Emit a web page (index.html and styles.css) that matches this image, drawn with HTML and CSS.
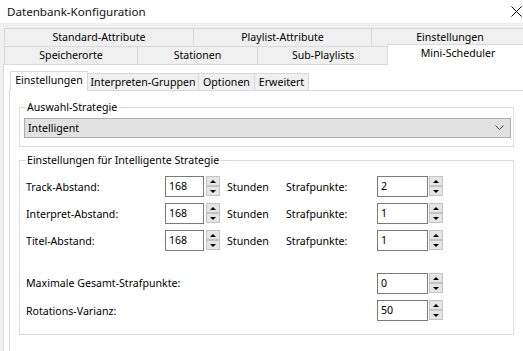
FILE: index.html
```html
<!DOCTYPE html>
<html lang="de">
<head>
<meta charset="utf-8">
<title>Datenbank-Konfiguration</title>
<link rel="stylesheet" href="styles.css">
</head>
<body>
<div class="window">
  <div class="titlebar">
    <span class="title">Datenbank-Konfiguration</span>
    <svg class="close" width="11" height="11" viewBox="0 0 11 11"><path d="M0.5 0.5 L10.5 10.5 M10.5 0.5 L0.5 10.5" stroke="#000" stroke-width="1" fill="none"/></svg>
  </div>

  <div class="tabs">
    <div class="tabrow">
      <div class="tab w189">Standard-Attribute</div>
      <div class="tab w178">Playlist-Attribute</div>
      <div class="tab grow">Einstellungen</div>
    </div>
    <div class="tabrow">
      <div class="tab w133">Speicherorte</div>
      <div class="tab w120">Stationen</div>
      <div class="tab w131">Sub-Playlists</div>
      <div class="tab grow selected">Mini-Scheduler</div>
    </div>
  </div>

  <div class="panel">
    <div class="subtabs">
      <div class="subtab selected">Einstellungen</div>
      <div class="subtab w111">Interpreten-Gruppen</div>
      <div class="subtab w56">Optionen</div>
      <div class="subtab w54">Erweitert</div>
    </div>
    <div class="subpanel">
      <fieldset class="group group-strategy">
        <legend>Auswahl-Strategie</legend>
        <div class="combo">
          <span>Intelligent</span>
          <svg class="chevron" width="9" height="6" viewBox="0 0 9 6"><path d="M0.5 0.5 L4.5 4.5 L8.5 0.5" stroke="#444" stroke-width="1" fill="none"/></svg>
        </div>
      </fieldset>

      <fieldset class="group group-settings">
        <legend>Einstellungen für Intelligente Strategie</legend>
        <div class="grid">
          <div class="label">Track-Abstand:</div>
          <div class="spin narrow"><div class="input">168</div><div class="buttons"><div class="btn"><span class="up"></span></div><div class="btn"><span class="down"></span></div></div></div>
          <div class="unit">Stunden</div>
          <div class="label">Strafpunkte:</div>
          <div class="spin wide"><div class="input">2</div><div class="buttons"><div class="btn"><span class="up"></span></div><div class="btn"><span class="down"></span></div></div></div>

          <div class="label">Interpret-Abstand:</div>
          <div class="spin narrow"><div class="input">168</div><div class="buttons"><div class="btn"><span class="up"></span></div><div class="btn"><span class="down"></span></div></div></div>
          <div class="unit">Stunden</div>
          <div class="label">Strafpunkte:</div>
          <div class="spin wide"><div class="input">1</div><div class="buttons"><div class="btn"><span class="up"></span></div><div class="btn"><span class="down"></span></div></div></div>

          <div class="label">Titel-Abstand:</div>
          <div class="spin narrow"><div class="input">168</div><div class="buttons"><div class="btn"><span class="up"></span></div><div class="btn"><span class="down"></span></div></div></div>
          <div class="unit">Stunden</div>
          <div class="label">Strafpunkte:</div>
          <div class="spin wide"><div class="input">1</div><div class="buttons"><div class="btn"><span class="up"></span></div><div class="btn"><span class="down"></span></div></div></div>

          <div class="label span4 bottom">Maximale Gesamt-Strafpunkte:</div>
          <div class="spin wide bottom"><div class="input">0</div><div class="buttons"><div class="btn"><span class="up"></span></div><div class="btn"><span class="down"></span></div></div></div>

          <div class="label span4">Rotations-Varianz:</div>
          <div class="spin wide"><div class="input">50</div><div class="buttons"><div class="btn"><span class="up"></span></div><div class="btn"><span class="down"></span></div></div></div>
        </div>
      </fieldset>
    </div>
  </div>
</div>
</body>
</html>
```

FILE: styles.css
```css
* { box-sizing: border-box; }

html, body {
  margin: 0;
  width: 523px;
  height: 351px;
  overflow: hidden;
}

body {
  background: #f0f0f0;
  font-family: "Noto Sans", "DejaVu Sans", sans-serif;
  font-size: 10.6px;
  color: #000;
}

.window {
  width: 523px;
  height: 351px;
  display: flex;
  flex-direction: column;
}

.titlebar {
  height: 23px;
  background: #fff;
  display: flex;
  align-items: center;
  justify-content: space-between;
  padding: 0 1px 1px 7px;
  flex: none;
}

.title {
  font-size: 11.6px;
  color: #111;
}

.close {
  display: block;
}

/* outer tabs */
.tabs {
  margin: 5px 0 0 4px;
  width: 525px;
  flex: none;
}

.tabrow {
  display: flex;
  align-items: flex-end;
  height: 18px;
}

.tab {
  height: 18px;
  line-height: 16px;
  text-align: center;
  background: #f0f0f0;
  border: 1px solid #d9d9d9;
  border-right: none;
  border-bottom: none;
  white-space: nowrap;
}

.tab.grow { flex: 1; border-right: 1px solid #d9d9d9; }
.w189 { width: 189px; }
.w178 { width: 178px; }
.w133 { width: 133px; }
.w120 { width: 120px; }
.w131 { width: 131px; }

.tab.selected {
  height: 21px;
  margin-bottom: -1px;
  margin-left: -1px;
  background: #fff;
  position: relative;
  z-index: 1;
  line-height: 17px;
}

/* main panel */
.panel {
  flex: 1;
  margin-left: 3px;
  width: 530px;
  background: #fff;
  border: 1px solid #d9d9d9;
  padding-top: 6px;
}

.subtabs {
  display: flex;
  align-items: flex-end;
  height: 19px;
  margin-left: 6px;
}

.subtab {
  height: 17px;
  line-height: 16px;
  text-align: center;
  background: #f0f0f0;
  border: 1px solid #d9d9d9;
  border-bottom: none;
  border-left: none;
  white-space: nowrap;
}

.w111 { width: 111px; }
.w56 { width: 56px; }
.w54 { width: 54px; }

.subtab.selected {
  height: 20px;
  margin-bottom: -1px;
  line-height: 17px;
  width: 78px;
  background: #fff;
  border-left: 1px solid #d9d9d9;
  position: relative;
  z-index: 1;
}

.subpanel {
  margin-left: 5px;
  border: 1px solid #d9d9d9;
  border-right: none;
  border-bottom: none;
  height: 270px;
  padding: 9px 0 0 9px;
}

.group {
  margin: 0;
  width: 495px;
  border: 1px solid #dcdcdc;
  padding: 0 2px 8px 4px;
  min-width: 0;
}

.group legend {
  margin-left: 2px;
  padding: 0 1px;
  line-height: 15px;
}

.combo {
  margin-top: 3px;
  height: 20px;
  background: #e1e1e1;
  border: 1px solid #adadad;
  display: flex;
  align-items: center;
  justify-content: space-between;
  padding: 0 6px 0 3px;
}

.chevron { display: block; }

.group-settings {
  margin-top: 6px;
  padding: 0 0 13px 4px;
}

.grid {
  margin: 8px 0 0 2px;
  display: grid;
  grid-template-columns: 139px 55px 66px 91px 66px;
  grid-template-rows: 21px 21px 21px 37px 21px;
  row-gap: 6px;
  align-items: center;
}

.span4 { grid-column: 1 / span 4; }
.bottom { align-self: end; }
.label.bottom { line-height: 21px; }

.unit { padding-left: 7px; }

.spin {
  display: flex;
  height: 21px;
}

.spin .input {
  height: 21px;
  border: 1px solid #7a7a7a;
  padding-left: 3px;
  line-height: 19px;
  background: #fff;
}

.spin.narrow .input { width: 39px; margin-right: 2px; }
.spin.wide .input { width: 51px; margin-right: 1px; }

.buttons {
  width: 14px;
  display: flex;
  flex-direction: column;
  justify-content: space-between;
  padding: 0 0 1px 0;
}

.btn {
  height: 10px;
  background: #e5e5e5;
  border: 1px solid #c4c4c4;
  display: flex;
  align-items: center;
  justify-content: center;
}

.up, .down {
  width: 0;
  height: 0;
  border-left: 3px solid transparent;
  border-right: 3px solid transparent;
}
.up { border-bottom: 3px solid #000; }
.down { border-top: 3px solid #000; }
```
